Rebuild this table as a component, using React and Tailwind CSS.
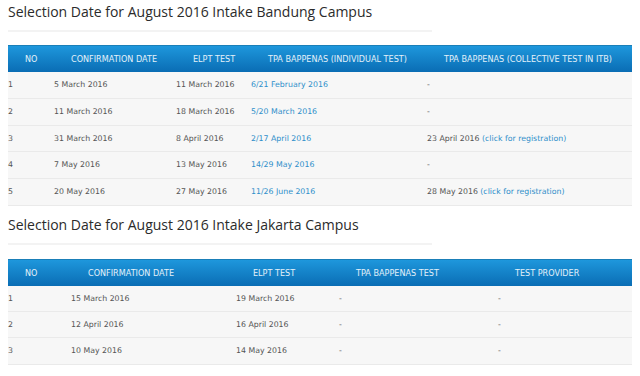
import React from "react";

const link = "text-[#2f8fca]";

const t1 = [
  ["1", "5 March 2016", "11 March 2016", [["6/21 February 2016", true]], [["-", false]]],
  ["2", "11 March 2016", "18 March 2016", [["5/20 March 2016", true]], [["-", false]]],
  ["3", "31 March 2016", "8 April 2016", [["2/17 April 2016", true]], [["23 April 2016 ", false], ["(click for registration)", true]]],
  ["4", "7 May 2016", "13 May 2016", [["14/29 May 2016", true]], [["-", false]]],
  ["5", "20 May 2016", "27 May 2016", [["11/26 June 2016", true]], [["28 May 2016 ", false], ["(click for registration)", true]]],
];
const t1h = ["h-[27px]", "h-[27px]", "h-[26px]", "h-[27px]", "h-[27px]"];

const t2 = [
  ["1", "15 March 2016", "19 March 2016", "-", "-"],
  ["2", "12 April 2016", "16 April 2016", "-", "-"],
  ["3", "10 May 2016", "14 May 2016", "-", "-"],
];
const t2h = ["h-[26px]", "h-[26px]", "h-[27px]"];

function Header({ cols, labels }) {
  return (
    <div className={`grid ${cols} h-[27px] items-center bg-gradient-to-b from-[#1e97dc] to-[#0a6db4] border-t border-[#1a7fb8] text-[#e4f1fa] text-[8.1px]`}>
      {labels.map((l, i) => (
        <div key={i} className="pl-[17px] whitespace-nowrap">{l}</div>
      ))}
    </div>
  );
}

function Cell({ v }) {
  if (Array.isArray(v)) {
    return (
      <div className="whitespace-nowrap">
        {v.map(([t, isLink], i) => (
          <span key={i} className={isLink ? link : ""}>{t}</span>
        ))}
      </div>
    );
  }
  return <div className="whitespace-nowrap">{v}</div>;
}

function Heading({ children }) {
  return (
    <>
      <h2 className="h-[20px] leading-[20px] text-[14px] text-[#2b2b2b] font-['Open_Sans',sans-serif] whitespace-nowrap">
        {children}
      </h2>
      <div className="mt-[8px] h-[2px] w-[424px] bg-[#f3f3f3]" />
    </>
  );
}

export default function App() {
  const cols1 = "grid-cols-[46px_122px_75px_176px_205px]";
  const cols2 = "grid-cols-[63px_165px_103px_159px_134px]";
  return (
    <div className="w-[640px] h-[376px] bg-white overflow-hidden pl-[8px] pt-[2px] font-['DejaVu_Sans',sans-serif] text-[7.8px] text-[#555]">
      <Heading>Selection Date for August 2016 Intake Bandung Campus</Heading>
      <div className="mt-[13px] w-[624px]">
        <Header
          cols={cols1}
          labels={["NO", "CONFIRMATION DATE", "ELPT TEST", "TPA BAPPENAS (INDIVIDUAL TEST)", "TPA BAPPENAS (COLLECTIVE TEST IN ITB)"]}
        />
        {t1.map((r, i) => (
          <div key={i} className={`grid ${cols1} ${t1h[i]} items-center bg-[#f7f7f7] border-b border-[#eaeaea]`}>
            <Cell v={r[0]} />
            <Cell v={r[1]} />
            <Cell v={r[2]} />
            <Cell v={r[3]} />
            <Cell v={r[4]} />
          </div>
        ))}
      </div>
      <div className="mt-[9px]">
        <Heading>Selection Date for August 2016 Intake Jakarta Campus</Heading>
      </div>
      <div className="mt-[14px] w-[624px]">
        <Header cols={cols2} labels={["NO", "CONFIRMATION DATE", "ELPT TEST", "TPA BAPPENAS TEST", "TEST PROVIDER"]} />
        {t2.map((r, i) => (
          <div key={i} className={`grid ${cols2} ${t2h[i]} items-center bg-[#f7f7f7] border-b border-[#eaeaea]`}>
            {r.map((c, j) => (
              <Cell key={j} v={c} />
            ))}
          </div>
        ))}
      </div>
    </div>
  );
}
